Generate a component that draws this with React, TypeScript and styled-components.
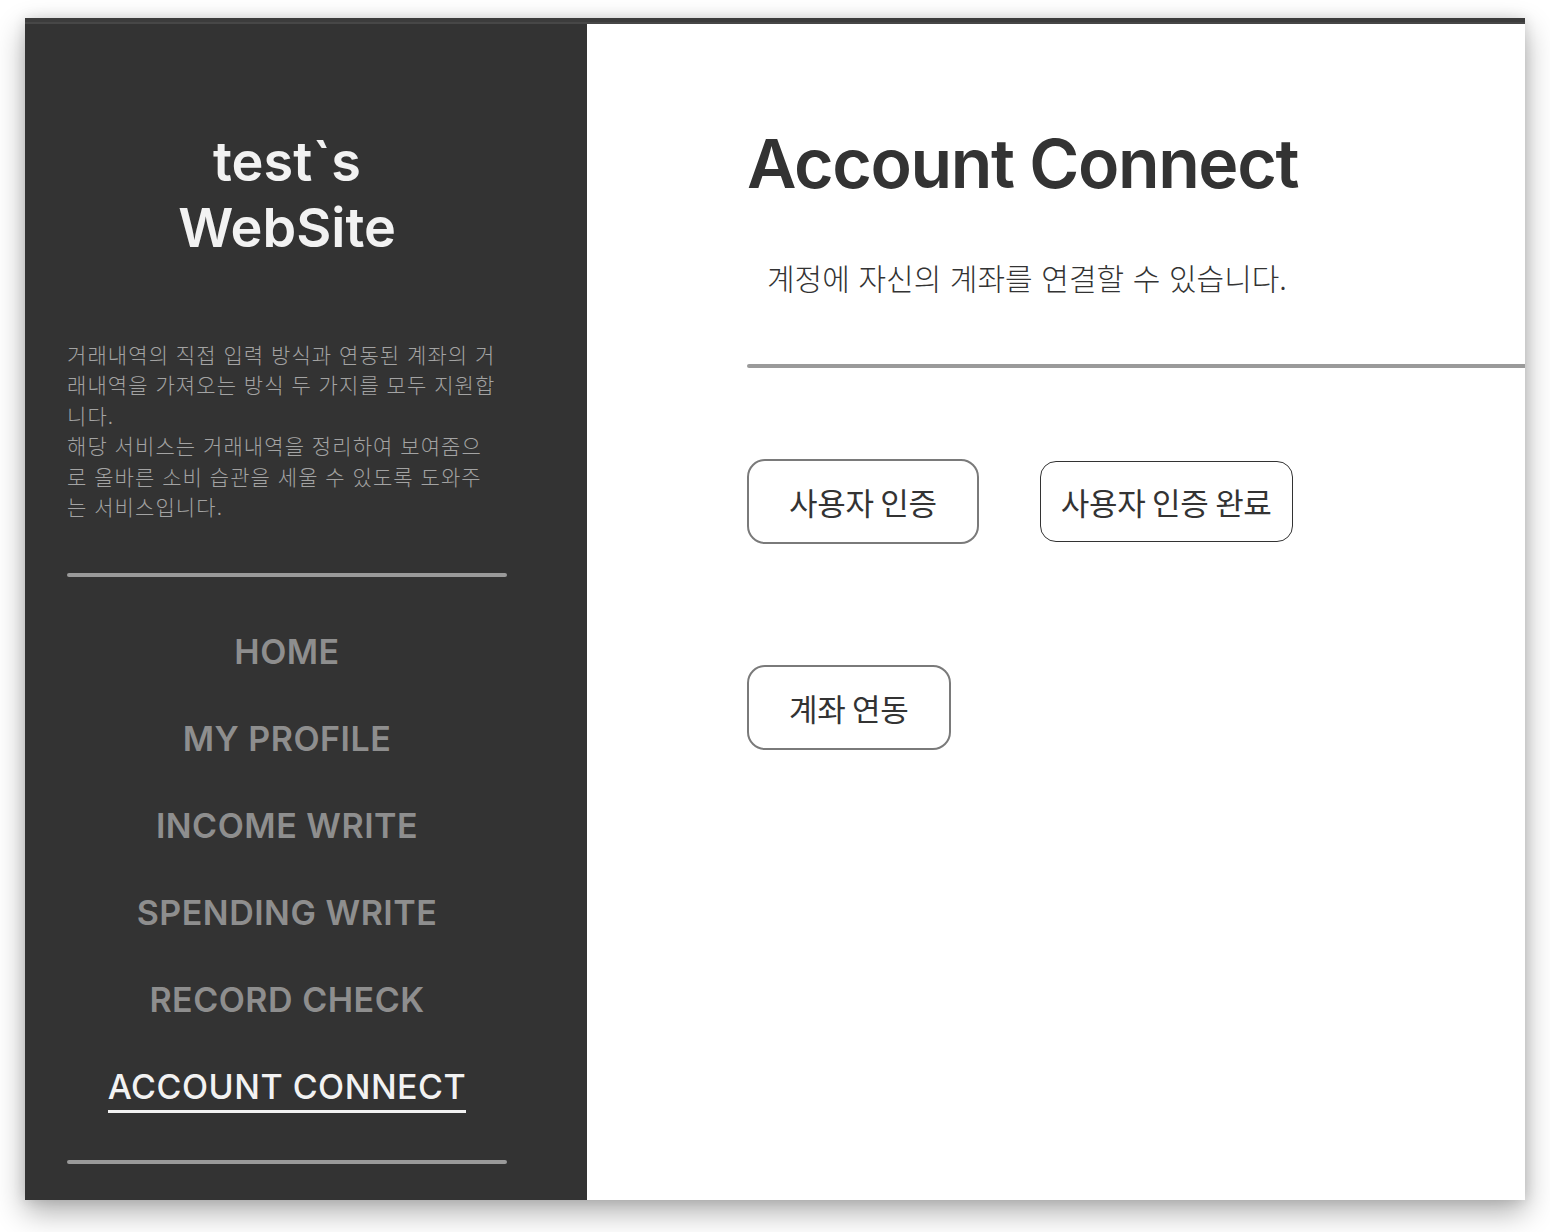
import React from "react";
import styled, { createGlobalStyle } from "styled-components";

const GlobalStyle = createGlobalStyle`
  html, body {
    margin: 0;
    padding: 0;
    background: #ffffff;
  }
  body {
    font-family: "Inter", "Noto Sans CJK KR", sans-serif;
  }
  * { box-sizing: border-box; }
`;

const Stage = styled.div`
  padding: 18px 25px 32px 25px;
`;

const Window = styled.div`
  width: 1500px;
  height: 1182px;
  display: flex;
  flex-direction: column;
  background: #ffffff;
  box-shadow: 0 12px 28px rgba(0, 0, 0, 0.32), 0 0 12px rgba(0, 0, 0, 0.12);
`;

const TopBar = styled.div`
  height: 6px;
  flex: none;
  background: linear-gradient(#3c3c3c 0 4px, #474747 4px 6px);
`;

const Body = styled.div`
  flex: 1;
  display: flex;
  min-height: 0;
`;

const Sidebar = styled.aside`
  width: 562px;
  flex: none;
  background: #333333;
  padding: 105px 80px 0 42px;
  display: flex;
  flex-direction: column;
`;

const SiteTitle = styled.h1`
  margin: 0;
  font-family: "Inter", sans-serif;
  font-size: 54px;
  line-height: 66px;
  font-weight: 600;
  color: #f2f2f2;
  text-align: center;
`;

const Description = styled.p`
  margin: 78px 0 0 0;
  font-family: "Noto Sans CJK KR", sans-serif;
  font-size: 21px;
  line-height: 30.4px;
  font-weight: 300;
  color: #a3a3a3;
  letter-spacing: 1.1px;
  word-spacing: 1px;
`;

const Line = styled.span`
  display: block;
  white-space: nowrap;
`;

const Rule = styled.hr<{ $mt: number }>`
  margin: ${(p) => p.$mt}px 0 0 0;
  border: none;
  height: 4px;
  border-radius: 2px;
  background: #9a9a9a;
`;

const Nav = styled.nav`
  margin-top: 55px;
  display: flex;
  flex-direction: column;
  align-items: center;
  gap: 47px;
`;

const NavItem = styled.a<{ $active?: boolean }>`
  font-family: "Inter", sans-serif;
  font-size: 34px;
  line-height: 40px;
  letter-spacing: 0.5px;
  font-weight: ${(p) => (p.$active ? 500 : 600)};
  color: ${(p) => (p.$active ? "#f2f2f2" : "#8e8e8e")};
  text-decoration: none;
  white-space: nowrap;
  position: relative;
  &::after {
    content: "";
    display: ${(p) => (p.$active ? "block" : "none")};
    position: absolute;
    left: 0;
    right: 0;
    bottom: -6px;
    height: 3px;
    background: #f2f2f2;
  }
`;

const Main = styled.main`
  flex: 1;
  padding: 98px 0 0 160px;
  display: flex;
  flex-direction: column;
`;

const Heading = styled.h2`
  margin: 0;
  font-family: "Inter", sans-serif;
  font-size: 68px;
  line-height: 82px;
  font-weight: 600;
  color: #333333;
  letter-spacing: -1.4px;
`;

const Subtitle = styled.p`
  margin: 55px 0 0 20px;
  font-family: "Noto Sans CJK KR", sans-serif;
  font-size: 30px;
  line-height: 36px;
  font-weight: 300;
  color: #333333;
  word-spacing: 2px;
`;

const MainRule = styled.hr`
  margin: 69px 0 0 0;
  border: none;
  height: 4px;
  border-radius: 2px 0 0 2px;
  background: #9a9a9a;
`;

const ButtonRow = styled.div<{ $mt: number }>`
  margin-top: ${(p) => p.$mt}px;
  display: flex;
  align-items: center;
  gap: 61px;
`;

const ActionButton = styled.button<{ $variant?: "primary" | "done" }>`
  font-family: "Noto Sans CJK KR", sans-serif;
  font-size: 31px;
  font-weight: 400;
  color: #333333;
  background: #ffffff;
  cursor: pointer;
  line-height: 36px;
  letter-spacing: -0.3px;
  ${(p) =>
    p.$variant === "done"
      ? `
    height: 81px;
    padding: 0 20px;
    border: 1px solid #333333;
    border-radius: 16px;
  `
      : `
    height: 85px;
    padding: 0 40px;
    border: 2px solid #7a7a7a;
    border-radius: 18px;
  `}
`;

const navItems = [
  "HOME",
  "MY PROFILE",
  "INCOME WRITE",
  "SPENDING WRITE",
  "RECORD CHECK",
  "ACCOUNT CONNECT",
];

export default function App() {
  return (
    <>
      <GlobalStyle />
      <Stage>
        <Window>
          <TopBar />
          <Body>
            <Sidebar>
              <SiteTitle>
                test`s
                <br />
                WebSite
              </SiteTitle>
              <Description>
                <Line>거래내역의 직접 입력 방식과 연동된 계좌의 거</Line>
                <Line>래내역을 가져오는 방식 두 가지를 모두 지원합</Line>
                <Line>니다.</Line>
                <Line>해당 서비스는 거래내역을 정리하여 보여줌으</Line>
                <Line>로 올바른 소비 습관을 세울 수 있도록 도와주</Line>
                <Line>는 서비스입니다.</Line>
              </Description>
              <Rule $mt={52} />
              <Nav>
                {navItems.map((item) => (
                  <NavItem
                    key={item}
                    href="#"
                    $active={item === "ACCOUNT CONNECT"}
                  >
                    {item}
                  </NavItem>
                ))}
              </Nav>
              <Rule $mt={53} />
            </Sidebar>
            <Main>
              <Heading>Account Connect</Heading>
              <Subtitle>계정에 자신의 계좌를 연결할 수 있습니다.</Subtitle>
              <MainRule />
              <ButtonRow $mt={91}>
                <ActionButton>사용자 인증</ActionButton>
                <ActionButton $variant="done">사용자 인증 완료</ActionButton>
              </ButtonRow>
              <ButtonRow $mt={121}>
                <ActionButton>계좌 연동</ActionButton>
              </ButtonRow>
            </Main>
          </Body>
        </Window>
      </Stage>
    </>
  );
}
